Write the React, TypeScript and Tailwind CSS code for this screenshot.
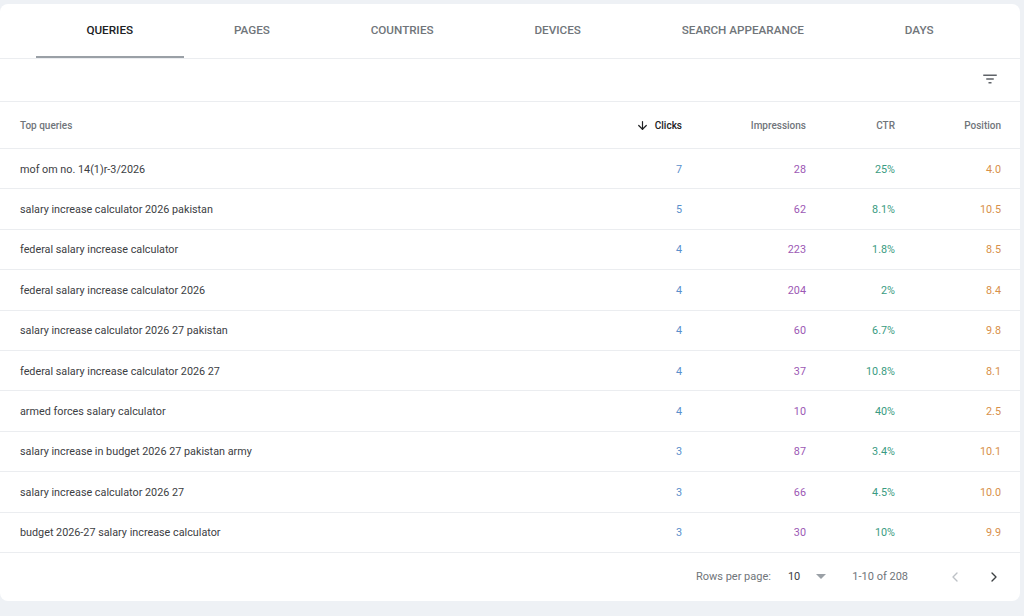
import { ArrowDown, ChevronLeft, ChevronRight } from 'lucide-react'

type Row = {
  query: string
  clicks: number
  impressions: number
  ctr: string
  position: string
}

const tabs = ['QUERIES', 'PAGES', 'COUNTRIES', 'DEVICES', 'SEARCH APPEARANCE', 'DAYS']

const rows: Row[] = [
  { query: 'mof om no. 14(1)r-3/2026', clicks: 7, impressions: 28, ctr: '25%', position: '4.0' },
  { query: 'salary increase calculator 2026 pakistan', clicks: 5, impressions: 62, ctr: '8.1%', position: '10.5' },
  { query: 'federal salary increase calculator', clicks: 4, impressions: 223, ctr: '1.8%', position: '8.5' },
  { query: 'federal salary increase calculator 2026', clicks: 4, impressions: 204, ctr: '2%', position: '8.4' },
  { query: 'salary increase calculator 2026 27 pakistan', clicks: 4, impressions: 60, ctr: '6.7%', position: '9.8' },
  { query: 'federal salary increase calculator 2026 27', clicks: 4, impressions: 37, ctr: '10.8%', position: '8.1' },
  { query: 'armed forces salary calculator', clicks: 4, impressions: 10, ctr: '40%', position: '2.5' },
  { query: 'salary increase in budget 2026 27 pakistan army', clicks: 3, impressions: 87, ctr: '3.4%', position: '10.1' },
  { query: 'salary increase calculator 2026 27', clicks: 3, impressions: 66, ctr: '4.5%', position: '10.0' },
  { query: 'budget 2026-27 salary increase calculator', clicks: 3, impressions: 30, ctr: '10%', position: '9.9' },
]

function FilterIcon() {
  return (
    <svg width="18" height="18" viewBox="0 0 24 24" fill="#5f6368">
      <path d="M3 6h18v2H3zM7 11h10v2H7zM10 16h4v2h-4z" />
    </svg>
  )
}

export default function App() {
  return (
    <div
      className="h-[616px] w-[1024px] overflow-hidden bg-[#eef1f5] pt-[4px]"
      style={{ fontFamily: 'Roboto, "Liberation Sans", Arial, sans-serif' }}
    >
      <div className="w-[1020px] rounded-lg bg-white">
        {/* tabs */}
        <div className="flex h-[55px] border-b border-[#ebedf0] px-9">
          {tabs.map((tab, i) => (
            <div
              key={tab}
              className={`flex flex-auto items-center justify-center border-b-2 pt-[2px] text-[11.7px] font-medium ${
                i === 0 ? 'border-[#9aa0a6] text-[#202124]' : 'border-transparent text-[#70757a]'
              }`}
            >
              {tab}
            </div>
          ))}
        </div>

        {/* filter bar */}
        <div className="flex h-[43px] items-center justify-end border-b border-[#ebedf0] pb-[3px] pr-[21px]">
          <FilterIcon />
        </div>

        {/* header */}
        <div className="flex h-[47px] items-center border-b border-[#ebedf0] text-[10px] font-medium text-[#70757a]">
          <div className="flex-1 pl-5">Top queries</div>
          <div className="flex w-[120px] items-center justify-end gap-[6px] text-[#202124]">
            <ArrowDown size={13} strokeWidth={2.2} />
            Clicks
          </div>
          <div className="w-[124px] text-right">Impressions</div>
          <div className="w-[89px] text-right">CTR</div>
          <div className="w-[106px] text-right">Position</div>
          <div className="w-[19px]" />
        </div>

        {/* rows */}
        {rows.map((row) => (
          <div key={row.query} className="flex h-[40.4px] items-center border-b border-[#ebedf0] pt-[2px] text-[10.8px]">
            <div className="flex-1 pl-5 text-[#3c4043]">{row.query}</div>
            <div className="w-[120px] text-right text-[#5a8fcc]">{row.clicks}</div>
            <div className="w-[124px] text-right text-[#9c58b4]">{row.impressions}</div>
            <div className="w-[89px] text-right text-[#3a9b82]">{row.ctr}</div>
            <div className="w-[106px] text-right text-[#d8904a]">{row.position}</div>
            <div className="w-[19px]" />
          </div>
        ))}

        {/* footer */}
        <div className="flex h-[48px] items-center justify-end text-[11px] text-[#70757a]">
          <span>Rows per page:</span>
          <span className="ml-[17px] text-[#3c4043]">10</span>
          <svg className="ml-[16px]" width="10" height="6" viewBox="0 0 10 6">
            <path d="M0 0h10L5 5z" fill="#9aa0a6" />
          </svg>
          <span className="ml-[26px]">1-10 of 208</span>
          <ChevronLeft className="ml-[39px]" size={16} color="#bdc1c6" strokeWidth={2} />
          <ChevronRight className="ml-[23px] mr-[18px]" size={16} color="#3c4043" strokeWidth={2} />
        </div>
      </div>
    </div>
  )
}
